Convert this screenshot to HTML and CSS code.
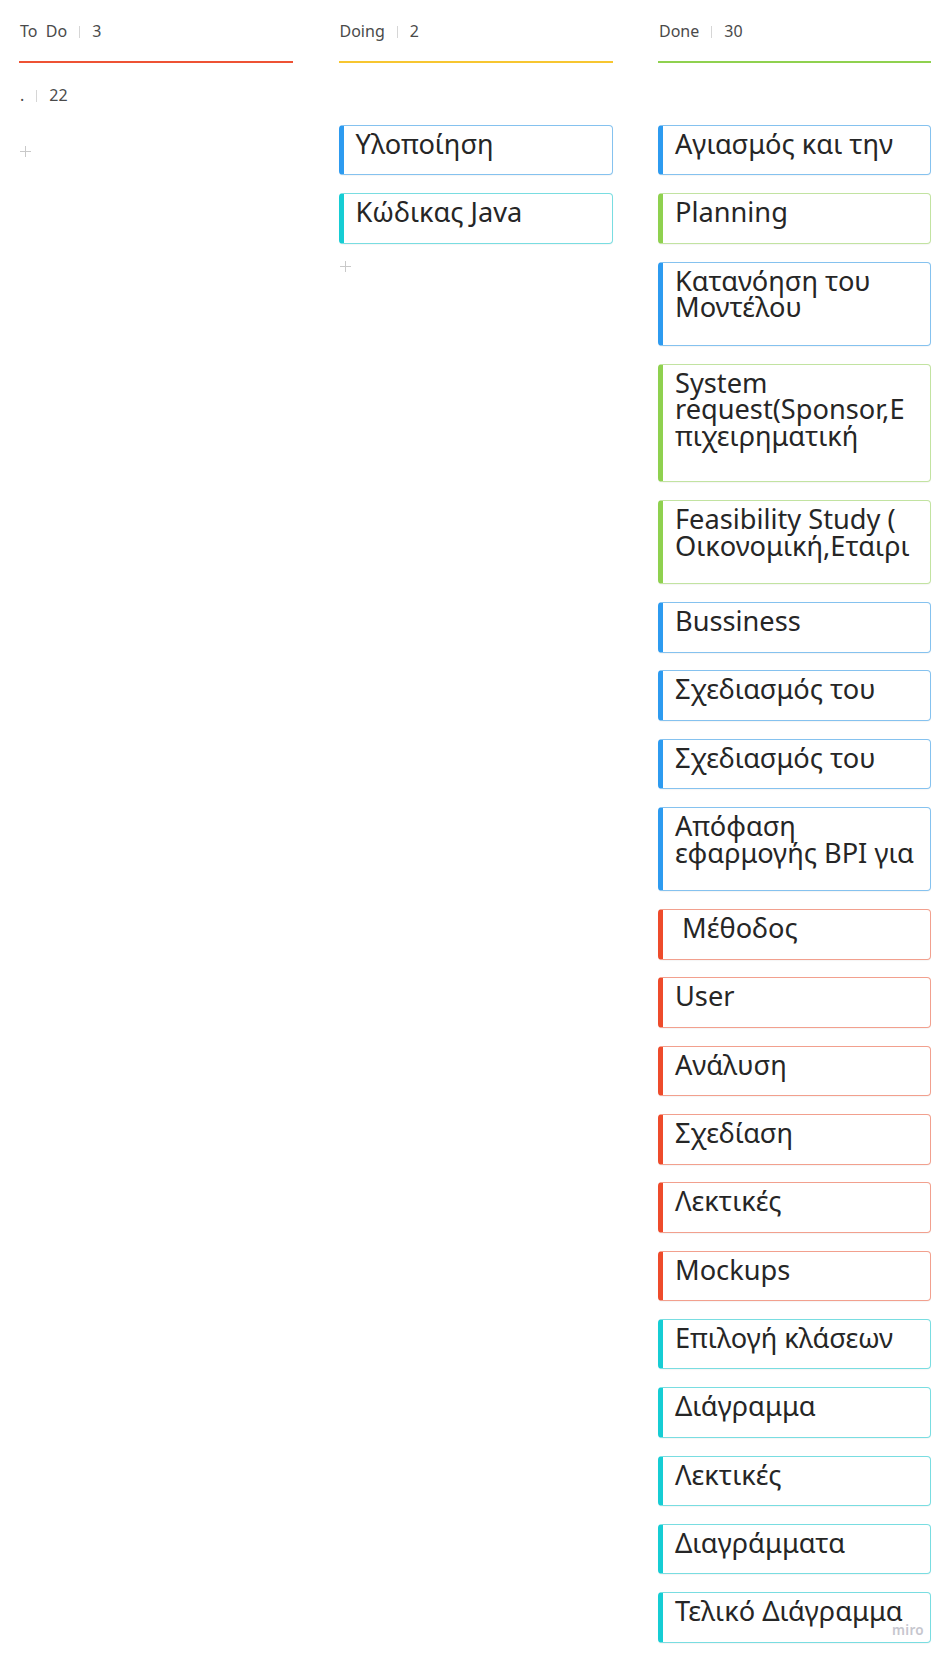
FILE: index.html
```html
<!DOCTYPE html>
<html lang="el">
<head>
<meta charset="utf-8">
<title>Kanban</title>
<link rel="stylesheet" href="styles.css">
</head>
<body>
<main class="board">
  <section class="column">
    <header class="column-head">
      <span class="column-title">To&nbsp;&nbsp;Do</span><span class="sep"></span><span class="count">3</span>
    </header>
    <div class="column-rule rule--red"></div>
    <div class="group-head"><span class="group-title">.</span><span class="sep"></span><span class="count">22</span></div>
    <div class="card-list"></div>
    <div class="add"><svg width="11" height="11" viewBox="0 0 11 11"><path d="M5.5 0v11M0 5.5h11" stroke="#c9c9c9" stroke-width="1"/></svg></div>
  </section>

  <section class="column">
    <header class="column-head">
      <span class="column-title">Doing</span><span class="sep"></span><span class="count">2</span>
    </header>
    <div class="column-rule rule--yellow"></div>
    <div class="group-head group-head--empty"></div>
    <div class="card-list">
      <div class="card card--blue">Υλοποίηση</div>
      <div class="card card--cyan">Κώδικας Java</div>
    </div>
    <div class="add"><svg width="11" height="11" viewBox="0 0 11 11"><path d="M5.5 0v11M0 5.5h11" stroke="#c9c9c9" stroke-width="1"/></svg></div>
  </section>

  <section class="column">
    <header class="column-head">
      <span class="column-title">Done</span><span class="sep"></span><span class="count">30</span>
    </header>
    <div class="column-rule rule--green"></div>
    <div class="group-head group-head--empty"></div>
    <div class="card-list">
      <div class="card card--blue">Αγιασμός και την</div>
      <div class="card card--green">Planning</div>
      <div class="card card--blue card--2">Κατανόηση του<br>Μοντέλου</div>
      <div class="card card--green card--3">System<br>request(Sponsor,Ε<br>πιχειρηματική</div>
      <div class="card card--green card--2">Feasibility Study (<br>Οικονομική,Εταιρι</div>
      <div class="card card--blue">Bussiness</div>
      <div class="card card--blue">Σχεδιασμός του</div>
      <div class="card card--blue">Σχεδιασμός του</div>
      <div class="card card--blue card--2">Απόφαση<br>εφαρμογής BPI για</div>
      <div class="card card--red">&nbsp;Μέθοδος</div>
      <div class="card card--red">User</div>
      <div class="card card--red">Ανάλυση</div>
      <div class="card card--red">Σχεδίαση</div>
      <div class="card card--red">Λεκτικές</div>
      <div class="card card--red">Mockups</div>
      <div class="card card--cyan">Επιλογή κλάσεων</div>
      <div class="card card--cyan">Διάγραμμα</div>
      <div class="card card--cyan">Λεκτικές</div>
      <div class="card card--cyan">Διαγράμματα</div>
      <div class="card card--cyan">Τελικό Διάγραμμα</div>
    </div>
  </section>
</main>
<div class="watermark">miro</div>
</body>
</html>
```

FILE: styles.css
```css
html, body {
  margin: 0;
  padding: 0;
  background: #ffffff;
  overflow: hidden;
}

body {
  position: relative;
  height: 1654px;
  font-family: "Noto Sans", "Open Sans", sans-serif;
}

.board {
  display: grid;
  grid-template-columns: 274px 274px 273px;
  column-gap: 45.5px;
  padding: 21.3px 0 0 19px;
}

.column {
  display: flex;
  flex-direction: column;
}

.column-head,
.group-head {
  display: flex;
  align-items: center;
  height: 20px;
  padding-left: 1px;
  font-size: 16px;
  line-height: 20px;
  color: #4a4a4a;
}

.sep {
  display: inline-block;
  width: 1px;
  height: 12px;
  margin: 2px 12px 0 12px;
  background: #d6d6d6;
}

.column-rule {
  height: 2px;
  margin-top: 19.7px;
}

.rule--red { background: #ee5234; }
.rule--yellow { background: #f7c630; }
.rule--green { background: #8fd14f; }

.group-head {
  margin-top: 22.3px;
}

.group-head--empty {
  visibility: hidden;
}

.card-list {
  display: flex;
  flex-direction: column;
  gap: 17.8px;
  margin-top: 19.7px;
}

.card-list:empty {
  min-height: 9px;
}

.card {
  box-sizing: border-box;
  height: 50.5px;
  border: 1px solid var(--soft);
  border-left: 5px solid var(--accent);
  border-radius: 4px;
  padding: 5px 6px 0 12px;
  background: #ffffff;
  font-size: 27.2px;
  line-height: 26.8px;
  color: #262626;
  white-space: nowrap;
  overflow: hidden;
  box-shadow: 0 1px 1px rgba(0, 0, 0, 0.04);
}

.card--2 { height: 84.3px; }
.card--3 { height: 118.6px; }

.card--blue { --accent: #2d9bf0; --soft: #85c2ef; }
.card--green { --accent: #8fd14f; --soft: #c2e3a1; }
.card--red { --accent: #ee4b2b; --soft: #f2a08e; }
.card--cyan { --accent: #16cdd4; --soft: #79dde1; }

.add {
  display: flex;
  height: 11px;
  margin-top: 17px;
  padding-left: 1px;
}

.card-list:empty + .add {
  margin-top: 12px;
}

.watermark {
  position: absolute;
  left: 892px;
  top: 1622px;
  font-size: 13.5px;
  line-height: 16px;
  font-weight: 600;
  letter-spacing: 0.3px;
  color: #c6c6ce;
}
```
